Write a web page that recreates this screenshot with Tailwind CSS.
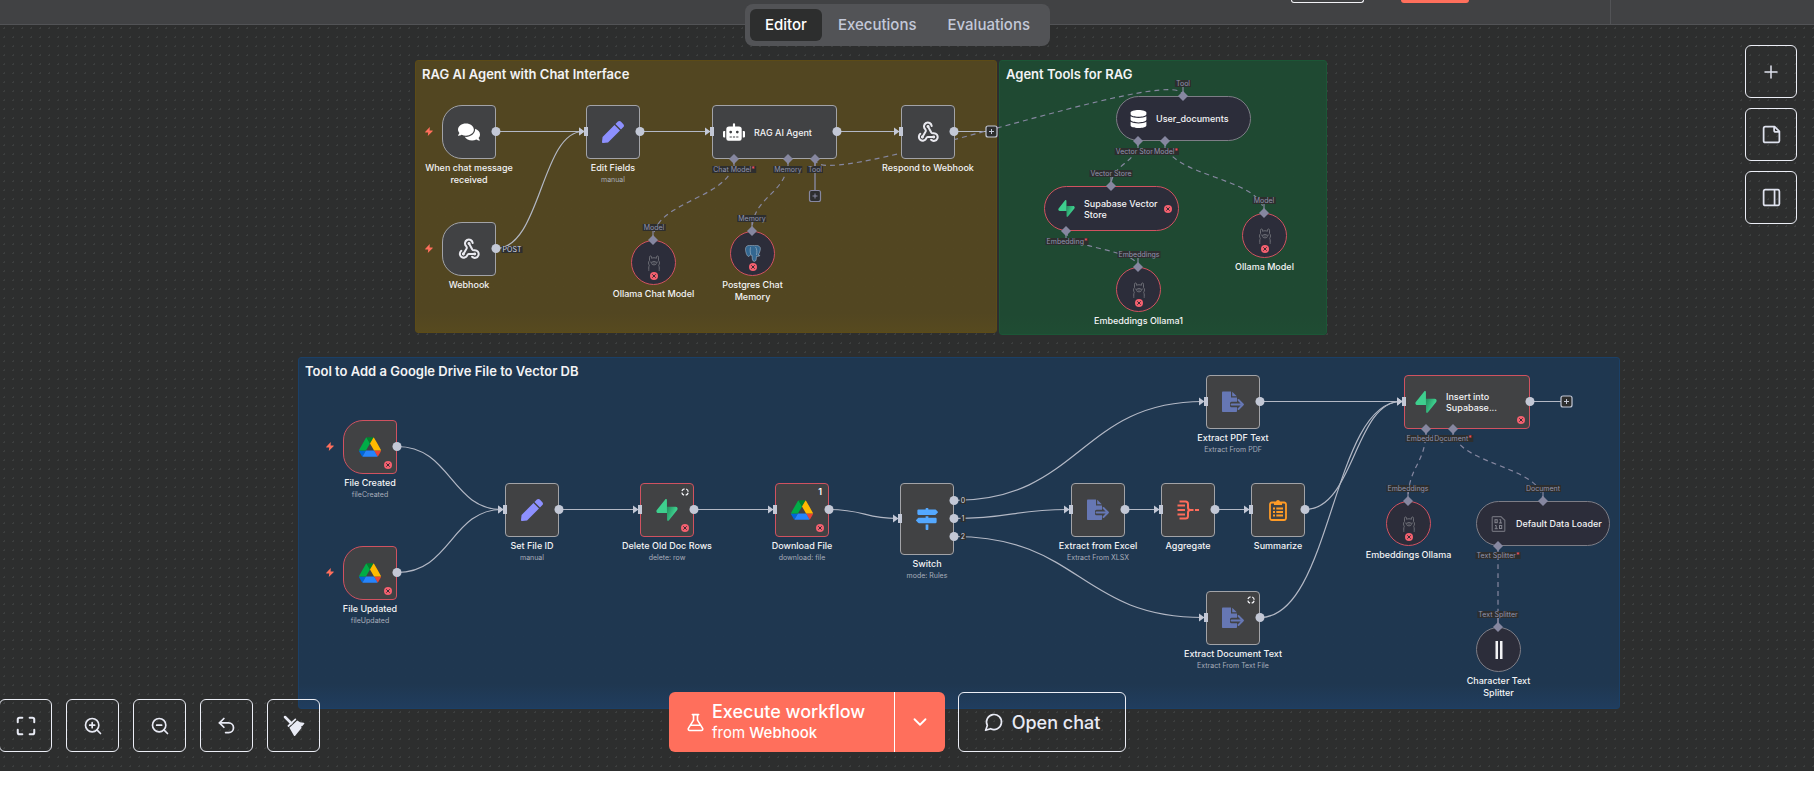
<!DOCTYPE html>
<html lang="en">
<head>
<meta charset="utf-8">
<title>Workflow editor</title>
<script src="https://cdn.jsdelivr.net/npm/@tailwindcss/browser@4"></script>
</head>
<body class="bg-white font-['Inter','Liberation_Sans',sans-serif]">

<svg class="absolute size-0" aria-hidden="true">
  <defs>
    <linearGradient id="supaShade" x1="53.9" y1="54.9" x2="94.1" y2="71.8" gradientUnits="userSpaceOnUse"><stop stop-color="#249361"/><stop offset="1" stop-color="#3ecf8e"/></linearGradient>
  </defs>
  <symbol id="chat" viewBox="0 0 576 512"><path fill="#fff" d="M416 192c0-88.4-93.1-160-208-160S0 103.6 0 192c0 34.3 14.1 65.9 38 92-13.4 30.2-35.5 54.2-35.8 54.5-2.2 2.3-2.8 5.7-1.5 8.7S4.8 352 8 352c36.6 0 66.9-12.3 88.7-25 32.2 15.7 70.3 25 111.3 25 114.9 0 208-71.6 208-160zm122 220c23.9-26 38-57.7 38-92 0-66.9-53.5-124.2-129.3-148.1.9 6.6 1.3 13.3 1.3 20.1 0 105.9-107.7 192-240 192-10.8 0-21.3-.8-31.7-1.9C207.8 439.6 281.8 480 368 480c41 0 79.1-9.2 111.3-25 21.8 12.7 52.1 25 88.7 25 3.2 0 6.1-1.9 7.3-4.8 1.3-2.9.7-6.3-1.5-8.7-.3-.3-22.4-24.2-35.8-54.5z"/></symbol>
  <symbol id="pen" viewBox="0 0 512 512"><path fill="#8d90ff" d="M290.74 93.24l128.02 128.02-277.99 277.99-114.14 12.6C11.35 513.54-1.56 500.62.14 485.34l12.7-114.22 277.9-277.88zm207.2-19.06l-60.11-60.11c-18.75-18.75-49.16-18.75-67.91 0l-56.55 56.55 128.02 128.02 56.55-56.55c18.75-18.76 18.75-49.16 0-67.91z"/></symbol>
  <symbol id="robot" viewBox="0 0 640 512"><path fill="#fff" d="M32,224H64V416H32A31.96,31.96,0,0,1,0,384V256A31.96,31.96,0,0,1,32,224Zm512-48V448a64.06,64.06,0,0,1-64,64H160a64.06,64.06,0,0,1-64-64V176a79.97,79.97,0,0,1,80-80H288V32a32,32,0,0,1,64,0V96H464A79.97,79.97,0,0,1,544,176ZM264,256a40,40,0,1,0-40,40A40,40,0,0,0,264,256Zm-8,128H192v32h64Zm96,0H288v32h64ZM456,256a40,40,0,1,0-40,40A40,40,0,0,0,456,256Zm-8,128H384v32h64ZM640,256V384a31.96,31.96,0,0,1-32,32H576V224h32A31.96,31.96,0,0,1,640,256Z"/></symbol>
  <symbol id="database" viewBox="0 0 448 512"><path fill="#fff" d="M448 73.143v45.714C448 159.143 347.667 192 224 192S0 159.143 0 118.857V73.143C0 32.857 100.333 0 224 0s224 32.857 224 73.143zM448 176v102.857C448 319.143 347.667 352 224 352S0 319.143 0 278.857V176c48.125 33.143 136.208 48.572 224 48.572S399.874 209.143 448 176zm0 160v102.857C448 479.143 347.667 512 224 512S0 479.143 0 438.857V336c48.125 33.143 136.208 48.572 224 48.572S399.874 369.143 448 336z"/></symbol>
  <symbol id="signs" viewBox="0 0 512 512"><path fill="#54a8ff" d="M507.31 84.69L464 41.37c-6-6-14.14-9.37-22.63-9.37H288V16c0-8.84-7.16-16-16-16h-32c-8.84 0-16 7.16-16 16v16H56c-13.25 0-24 10.75-24 24v80c0 13.25 10.75 24 24 24h385.37c8.49 0 16.62-3.37 22.63-9.37l43.31-43.31c6.25-6.26 6.25-16.38 0-22.63zM224 496c0 8.84 7.16 16 16 16h32c8.84 0 16-7.16 16-16V384h-64v112zm232-272H288v-32h-64v32H70.63c-8.49 0-16.62 3.37-22.63 9.37L4.69 276.69c-6.25 6.25-6.25 16.38 0 22.63L48 342.63c6 6 14.14 9.37 22.63 9.37H456c13.25 0 24-10.75 24-24v-80c0-13.25-10.75-24-24-24z"/></symbol>
  <symbol id="drive" viewBox="0 0 87.3 78"><path fill="#0066da" d="m6.6 66.85 3.85 6.65c.8 1.4 1.95 2.5 3.3 3.3l13.75-23.8h-27.5c0 1.55.4 3.1 1.2 4.5z"/><path fill="#00ac47" d="m43.65 25-13.75-23.8c-1.35.8-2.5 1.9-3.3 3.3l-25.4 44a9.06 9.06 0 0 0 -1.2 4.5h27.5z"/><path fill="#ea4335" d="m73.55 76.8c1.35-.8 2.5-1.9 3.3-3.3l1.6-2.75 7.65-13.25c.8-1.4 1.2-2.95 1.2-4.5h-27.502l5.852 11.5z"/><path fill="#00832d" d="m43.65 25 13.75-23.8c-1.35-.8-2.9-1.2-4.5-1.2h-18.5c-1.6 0-3.15.45-4.5 1.2z"/><path fill="#2684fc" d="m59.8 53h-32.3l-13.75 23.8c1.35.8 2.9 1.2 4.5 1.2h50.8c1.6 0 3.15-.45 4.5-1.2z"/><path fill="#ffba00" d="m73.4 26.5-12.7-22c-.8-1.4-1.95-2.5-3.3-3.3l-13.75 23.8 16.15 28h27.45c0-1.55-.4-3.1-1.2-4.5z"/></symbol>
  <symbol id="supabase" viewBox="0 0 109 113"><path fill="url(#supaShade)" d="M63.7 110.284C60.85 113.885 55.05 111.912 54.98 107.314L53.97 40.06L99.19 40.06C107.38 40.06 111.95 49.52 106.86 55.94L63.7 110.284Z"/><path fill="#3ecf8e" d="M45.3 2.07C48.18 -1.53 53.97 .44 54.04 5.04L54.48 72.29H9.83C1.64 72.29 -2.93 62.83 2.17 56.42L45.3 2.07Z"/></symbol>
  <symbol id="webhook" viewBox="0 0 24 24"><g fill="none" stroke="#e9e9ef" stroke-width="2.2" stroke-linecap="round" stroke-linejoin="round"><path d="M18.5 17.5h-7c-.4 0-.9.5-1.4 1.4A4.2 4.2 0 1 1 3.6 14"/><path d="m5.8 17.6 3.6-6.2c.3-.6.2-1.6-.4-2.4a4.2 4.2 0 1 1 7-3.6"/><path d="m12 6.1 3.6 6.4c.3.5 1.3.8 2.4.8a4.2 4.2 0 1 1-2.6 7.2"/></g><g fill="#e9e9ef"><circle cx="12" cy="6" r="1.6"/><circle cx="5.8" cy="17.5" r="1.6"/><circle cx="18.2" cy="17.5" r="1.6"/></g></symbol>
  <symbol id="extract" viewBox="0 0 22 22"><path fill="#6677b4" d="M0 1.5C0 1 .4.5 1 .5h8v6h6v4.2H9.5A1.5 1.5 0 0 0 8 12.2v2.6a1.5 1.5 0 0 0 1.5 1.5H15V20c0 .6-.4 1-1 1H1c-.6 0-1-.4-1-1zM10.2.7 14.8 5.3h-4.6z"/><path fill="none" stroke="#6677b4" stroke-width="1.8" stroke-linecap="round" stroke-linejoin="round" d="M9.5 13.5H21M16.5 9l4.5 4.5-4.5 4.5"/></symbol>
  <symbol id="aggregate" viewBox="0 0 22 22"><g fill="none" stroke="#ff6c5b" stroke-width="2"><path d="M2.5 2.5h6a2.500 2.500 0 0 1 2.500 2.500v3.500A2.500 2.500 0 0 0 13.500 11 2.500 2.500 0 0 0 11 13.500V17a2.500 2.500 0 0 1-2.500 2.500h-6"/><path d="M.5 6.500h7.500M.5 11h7.500M.5 15.500h7.500" stroke-width="1.8"/><path d="M13 11h3.500M18 11h4"/></g></symbol>
  <symbol id="clipboard" viewBox="0 0 18 22"><path fill="none" stroke="#ff9b26" stroke-width="1.8" d="M3 3.500h12A1.900 1.900 0 0 1 17 5.400v13.700A1.900 1.900 0 0 1 15 21H3a1.900 1.900 0 0 1-2-1.900V5.400A1.900 1.900 0 0 1 3 3.500z"/><path fill="#ff9b26" d="M5 3h2a2 2 0 0 1 4 0h2v3H5z"/><path stroke="#ff9b26" stroke-width="1.8" d="M4 9.500h2M7.300 9.500H14M4 13h2M7.300 13H14M4 16.500h2M7.300 16.500H14"/></symbol>
  <symbol id="llama" viewBox="0 0 12 16"><g fill="none" stroke="#6c6d75" stroke-width="1"><path d="M1.500 5.500V2.200C1.500.7 3.200.4 3.600 2v1.300c1.400-.7 3.400-.7 4.800 0V2C8.800.4 10.500.7 10.500 2.200v3.300M1.500 5.500C0 7 .4 9 1.300 10.300.5 12 .8 14 .8 15.800M10.500 5.500c1.500 1.500 1.100 3.500.2 4.800.8 1.700.5 3.700.5 5.500"/><ellipse cx="6" cy="8.200" rx="2.400" ry="1.700"/></g><g fill="#8b8c94"><circle cx="2.900" cy="7" r=".6"/><circle cx="9.100" cy="7" r=".6"/><circle cx="6" cy="8" r=".6"/></g></symbol>
  <symbol id="postgres" viewBox="0 0 16 17"><path fill="#336791" stroke="#b8c8d6" stroke-width=".5" d="M4.600.5C2.200.2.500 1.600.5 4.200c0 2.800 1.400 7 2.900 7.200.9.100 1.500-.8 2.200-1.600.3.500.8.700 1.500.6.100 2.200-.2 6 2.200 6 2 0 2-2.300 2.200-5.100.9.300 2.700 0 3.600-.9-.5-.2-1.300-.1-1.900-.3 1.600-2.600 2.700-6.200 1.900-7.800C13.900.4 11.600.1 9.900.7 8.200.3 6.500.400 4.600.5z"/><path fill="none" stroke="#a9bccb" stroke-width=".6" d="M5.800 9.600C5 7.500 5 4 5.600 2.200M10.600 2c1.300 2 1.600 5 .9 8"/></symbol>
  <symbol id="loader" viewBox="0 0 14 16"><path fill="none" stroke="#6d6e78" stroke-width="1.2" d="M1.500.7h8l3.800 3.500v10.200c0 .5-.4.900-.9.900H1.500a.8.8 0 0 1-.8-.9V1.500c0-.5.300-.8.800-.8z"/><g fill="none" stroke="#85868f" stroke-width="1"><rect x="3.500" y="3.700" width="2.200" height="3"/><path d="M8 3.700h1.200V7M7.500 7h3M3.500 9.500h1.200v3M3.200 12.700h3"/><rect x="8" y="9.500" width="2.200" height="3"/></g></symbol>
  <symbol id="splitter" viewBox="0 0 18 18"><path fill="#f2f2f4" d="M5.500 0h2.500v18H5.500zM10 0h2.500v18H10z"/></symbol>
  <symbol id="bolt" viewBox="0 0 8 9"><path fill="#ff6f5c" d="M4.800 0 .3 4.800c-.3.400-.1.700.3.700h2.600L2.800 9l4.800-4.700c.3-.4.100-.8-.3-.8H4.600z"/></symbol>
  <symbol id="error" viewBox="0 0 8 8"><circle cx="4" cy="4" r="4" fill="#f4606f"/><path stroke="#3b2b33" stroke-width="1" stroke-linecap="round" d="m2.600 2.600 2.800 2.800M5.400 2.600 2.600 5.400"/></symbol>
  <symbol id="runonce" viewBox="0 0 8 8"><circle cx="4" cy="4" r="3.200" fill="none" stroke="#f0f0f4" stroke-width="1.300" stroke-dasharray="3.400 1.627" stroke-dashoffset="-.8"/></symbol>
</svg>

<div class="flex h-screen flex-col overflow-hidden pb-[33px]">
  <div class="relative flex min-h-0 flex-1 flex-col overflow-hidden bg-[#2d2e2e]">

    <header class="flex h-[25px] shrink-0 items-start justify-end border-b border-[#525356] bg-[#414244]">
      <button type="button" aria-label="Share" class="h-[3px] w-[73px] rounded-b-md border border-t-0 border-[#f2f2f6]"></button>
      <button type="button" aria-label="Save" class="mr-[141px] ml-[37px] h-[3px] w-[68px] rounded-b-md bg-[#ff6f5c]"></button>
      <div class="h-6 w-[204px] border-l border-[#525356]"></div>
    </header>

    <main class="relative flex-1 bg-[radial-gradient(circle,#3c3e3e_1px,transparent_1px)] bg-[size:9px_9px] bg-[position:0_-1px]">
      <!-- Workflow canvas: sticky notes, edges, nodes, handles and handle labels -->
      <div id="canvas" class="absolute inset-x-0 -top-[25px]"></div>
    </main>

    <!-- View switch and floating controls, laid over the canvas -->
    <nav class="absolute top-1 right-0 -left-[19px] flex justify-center">
      <div class="flex gap-px rounded-lg bg-[#525356] p-[5px]" role="tablist">
        <button type="button" role="tab" aria-selected="true" class="h-8 rounded-md bg-[#2d2e2e] px-[15px] text-[15px] font-medium text-white">Editor</button>
        <button type="button" role="tab" class="h-8 px-[15px] text-[15px] font-medium text-[#c3c8d8]">Executions</button>
        <button type="button" role="tab" class="h-8 px-[15px] text-[15px] font-medium text-[#c3c8d8]">Evaluations</button>
      </div>
    </nav>

    <div class="absolute top-[45px] right-[17px] flex flex-col gap-2.5">
      <button type="button" aria-label="Add node" class="flex h-[53px] w-[52px] items-center justify-center rounded-md border border-[#eceef6] text-[#dfe2ee]"><svg class="size-[18px]" viewBox="0 0 24 24" fill="none" stroke="currentColor" stroke-width="2" stroke-linecap="round"><path d="M4 12h16M12 4v16"/></svg></button>
      <button type="button" aria-label="Add sticky note" class="flex h-[53px] w-[52px] items-center justify-center rounded-md border border-[#eceef6] text-[#dfe2ee]"><svg class="size-[21px]" viewBox="0 0 24 24" fill="none" stroke="currentColor" stroke-width="2" stroke-linejoin="round"><path d="M15.500 3H5a2 2 0 0 0-2 2v14a2 2 0 0 0 2 2h14a2 2 0 0 0 2-2V8.500z"/><path d="M15 3v4a2 2 0 0 0 2 2h4"/></svg></button>
      <button type="button" aria-label="Toggle panel" class="flex h-[53px] w-[52px] items-center justify-center rounded-md border border-[#eceef6] text-[#dfe2ee]"><svg class="size-[21px]" viewBox="0 0 24 24" fill="none" stroke="currentColor" stroke-width="2"><rect x="3" y="3" width="18" height="18" rx="2"/><path d="M15.500 3v18"/></svg></button>
    </div>

    <div class="absolute bottom-[19px] -left-px flex gap-3.5">
      <button type="button" aria-label="Fit view" class="flex size-[53px] items-center justify-center rounded-md border border-[#eceef6] text-[#e8eaf4]"><svg class="size-[22px]" viewBox="0 0 24 24" fill="none" stroke="currentColor" stroke-width="2.200" stroke-linecap="round" stroke-linejoin="round"><path d="M8 3H5a2 2 0 0 0-2 2v3M21 8V5a2 2 0 0 0-2-2h-3M3 16v3a2 2 0 0 0 2 2h3M16 21h3a2 2 0 0 0 2-2v-3"/></svg></button>
      <button type="button" aria-label="Zoom in" class="flex size-[53px] items-center justify-center rounded-md border border-[#eceef6] text-[#e8eaf4]"><svg class="size-5" viewBox="0 0 24 24" fill="none" stroke="currentColor" stroke-width="2" stroke-linecap="round"><circle cx="11" cy="11" r="8"/><path d="m21 21-4.300-4.300M11 8v6M8 11h6"/></svg></button>
      <button type="button" aria-label="Zoom out" class="flex size-[53px] items-center justify-center rounded-md border border-[#eceef6] text-[#e8eaf4]"><svg class="size-5" viewBox="0 0 24 24" fill="none" stroke="currentColor" stroke-width="2" stroke-linecap="round"><circle cx="11" cy="11" r="8"/><path d="m21 21-4.300-4.300M8 11h6"/></svg></button>
      <button type="button" aria-label="Undo" class="flex size-[53px] items-center justify-center rounded-md border border-[#eceef6] text-[#e8eaf4]"><svg class="size-[21px]" viewBox="0 0 24 24" fill="none" stroke="currentColor" stroke-width="2" stroke-linecap="round" stroke-linejoin="round"><path d="M9 14 4 9l5-5"/><path d="M4 9h10.500a5.500 5.500 0 0 1 0 11H11"/></svg></button>
      <button type="button" aria-label="Tidy up" class="flex size-[53px] items-center justify-center rounded-md border border-[#eceef6] text-[#e8eaf4]"><svg class="size-[22px]" viewBox="0 0 24 24" fill="currentColor"><path d="m2.200 2.200 6.800 6.800" stroke="currentColor" stroke-width="2.800" stroke-linecap="round"/><path d="M5.900 12 13.500 4.800" stroke="currentColor" stroke-width="1.900" stroke-linecap="round"/><path d="M7 13.800 15.500 6l3.200 2 3.900.4c.7.100.9.900.4 1.400l-2.200 2.400-.9-.300.3 2.200-6.900 8.500c-.5.500-1 .4-1.300-.1z"/></svg></button>
    </div>

    <div class="pointer-events-none absolute right-0 bottom-[19px] -left-[19px] flex justify-center gap-[13px]">
      <div class="pointer-events-auto flex h-[60px] overflow-hidden rounded-md bg-[#ff6f5c] text-white">
        <button type="button" class="flex w-[226px] items-center gap-[7px] border-r border-white pl-[17px] text-left">
          <svg class="size-[19px]" viewBox="0 0 24 24" fill="none" stroke="currentColor" stroke-width="2" stroke-linecap="round" stroke-linejoin="round"><path d="M8 2h8M9.500 2v7L3 19.500A1.700 1.700 0 0 0 4.500 22h15a1.700 1.700 0 0 0 1.500-2.500L14.500 9V2M6.500 15.500h11"/></svg>
          <span class="flex flex-col"><span class="text-[18px] leading-[22px] font-medium">Execute workflow</span><span class="text-[15px] leading-5">from <span class="font-medium">Webhook</span></span></span>
        </button>
        <button type="button" aria-label="Choose trigger" class="flex w-[50px] items-center justify-center"><svg class="size-[22px]" viewBox="0 0 24 24" fill="none" stroke="currentColor" stroke-width="2" stroke-linecap="round" stroke-linejoin="round"><path d="m6 9 6 6 6-6"/></svg></button>
      </div>
      <button type="button" class="pointer-events-auto flex h-[60px] w-[168px] items-center justify-center gap-2 rounded-md border border-[#eceef6] text-[18px] font-medium text-[#e8eaf4]">
        <svg class="size-5" viewBox="0 0 24 24" fill="none" stroke="currentColor" stroke-width="2" stroke-linejoin="round"><path d="M7.900 20A9 9 0 1 0 4 16.100L2 22z"/></svg>
        Open chat
      </button>
    </div>
  </div>
</div>

<script>
const notes = [
  { x: 415, y: 60, w: 582, h: 273, t: 'RAG AI Agent with Chat Interface', c: 'border-[#5c4b17] from-[#524621] to-[#574a1f]' },
  { x: 999, y: 60, w: 328, h: 275, t: 'Agent Tools for RAG', c: 'border-[#1c5636] from-[#1f4932] to-[#1f4c33]' },
  { x: 298, y: 357, w: 1322, h: 352, t: 'Tool to Add a Google Drive File to Vector DB', c: 'border-[#1b4067] from-[#1f3750] to-[#203d5e]' },
];
// k: trigger | box | wide | pill | round
const nodes = [
  { k: 'trigger', x: 442, y: 105, w: 54, h: 54, i: 'chat', n: 'When chat message<br>received' },
  { k: 'trigger', x: 442, y: 222, w: 54, h: 54, i: 'webhook', n: 'Webhook' },
  { k: 'box', x: 586, y: 105, w: 54, h: 54, i: 'pen', n: 'Edit Fields', s: 'manual' },
  { k: 'wide', x: 712, y: 105, w: 125, h: 54, i: 'robot', n: 'RAG AI Agent' },
  { k: 'box', x: 901, y: 105, w: 54, h: 54, i: 'webhook', n: 'Respond to Webhook' },
  { k: 'round', x: 631, y: 240, w: 45, h: 45, i: 'llama', n: 'Ollama Chat Model', e: 1 },
  { k: 'round', x: 730, y: 231, w: 45, h: 45, i: 'postgres', n: 'Postgres Chat<br>Memory', e: 1 },
  { k: 'pill', x: 1116, y: 96, w: 135, h: 45, i: 'database', n: 'User_documents' },
  { k: 'pill', x: 1044, y: 186, w: 135, h: 45, i: 'supabase', n: 'Supabase Vector<br>Store', e: 1 },
  { k: 'round', x: 1116, y: 267, w: 45, h: 45, i: 'llama', n: 'Embeddings Ollama1', e: 1 },
  { k: 'round', x: 1242, y: 213, w: 45, h: 45, i: 'llama', n: 'Ollama Model', e: 1 },
  { k: 'trigger', x: 343, y: 420, w: 54, h: 54, i: 'drive', n: 'File Created', s: 'fileCreated', e: 1 },
  { k: 'trigger', x: 343, y: 546, w: 54, h: 54, i: 'drive', n: 'File Updated', s: 'fileUpdated', e: 1 },
  { k: 'box', x: 505, y: 483, w: 54, h: 54, i: 'pen', n: 'Set File ID', s: 'manual' },
  { k: 'box', x: 640, y: 483, w: 54, h: 54, i: 'supabase', n: 'Delete Old Doc Rows', s: 'delete: row', e: 1, o: 1 },
  { k: 'box', x: 775, y: 483, w: 54, h: 54, i: 'drive', n: 'Download File', s: 'download: file', e: 1, b: '1' },
  { k: 'box', x: 900, y: 483, w: 54, h: 72, i: 'signs', n: 'Switch', s: 'mode: Rules' },
  { k: 'box', x: 1071, y: 483, w: 54, h: 54, i: 'extract', n: 'Extract from Excel', s: 'Extract From XLSX' },
  { k: 'box', x: 1161, y: 483, w: 54, h: 54, i: 'aggregate', n: 'Aggregate' },
  { k: 'box', x: 1251, y: 483, w: 54, h: 54, i: 'clipboard', n: 'Summarize' },
  { k: 'box', x: 1206, y: 375, w: 54, h: 54, i: 'extract', n: 'Extract PDF Text', s: 'Extract From PDF' },
  { k: 'box', x: 1206, y: 591, w: 54, h: 54, i: 'extract', n: 'Extract Document Text', s: 'Extract From Text File', o: 1 },
  { k: 'wide', x: 1404, y: 375, w: 126, h: 54, i: 'supabase', n: 'Insert into<br>Supabase...', e: 1 },
  { k: 'round', x: 1386, y: 501, w: 45, h: 45, i: 'llama', n: 'Embeddings Ollama', e: 1 },
  { k: 'pill', x: 1476, y: 501, w: 134, h: 45, i: 'loader', n: 'Default Data Loader' },
  { k: 'round', x: 1476, y: 627, w: 45, h: 45, i: 'splitter', n: 'Character Text<br>Splitter' },
];
// main edges: x1, y1, x2, y2
const edges = [
  [496,132,586,132],[496,249,586,132],[640,132,712,132],[837,132,901,132],
  [397,447,505,510],[397,573,505,510],[559,510,640,510],[694,510,775,510],[829,510,900,519],
  [954,501,1206,402],[954,519,1071,510],[954,537,1206,618],[1125,510,1161,510],[1215,510,1251,510],
  [1260,402,1404,402],[1305,510,1404,402],[1260,618,1404,402],
];
const loose = [[954,132,991,132],[1530,402,1566,402]];
// sub-node edges, bottom handle to top handle
const subs = [
  [734,159,653,240],[788,159,752,231],[815,159,1183,96],[1138,141,1111,186],[1165,141,1264,213],
  [1066,231,1138,267],[1426,429,1408,501],[1453,429,1543,501],[1498,546,1498,627],
];
const labels = [
  [734,169,'Chat Model',1],[788,169,'Memory'],[815,169,'Tool'],[654,227,'Model'],[752,218,'Memory'],
  [1183,83,'Tool'],[1138,151,'Vector Store',1],[1166,151,'Model',1],[1111,173,'Vector Store'],[1264,200,'Model'],
  [1067,241,'Embedding',1],[1139,254,'Embeddings'],[1427,438,'Embedding',1],[1453,438,'Document',1],
  [1408,488,'Embeddings'],[1543,488,'Document'],[1498,555,'Text Splitter',1],[1498,614,'Text Splitter'],
];
const outs = [[512,249,'POST'],[963,500,'0'],[963,518,'1'],[963,536,'2']];

const shape = {
  trigger: 'rounded-l-[20px] rounded-r-[4px] bg-[#414244]',
  box: 'rounded-[4px] bg-[#414244]',
  wide: 'rounded-[4px] bg-[#414244]',
  pill: 'rounded-full bg-[#2c2d3a]',
  round: 'rounded-full bg-[#2c2d3a]',
};
const use = (id, cls) => `<svg class="${cls}"><use href="#${id}"/></svg>`;
const at = (x, y, w, h) => `left:${x}px;top:${y}px;width:${w}px;height:${h}px`;
// centre of the pixel row just above y, so that 1px horizontals stay crisp
const row = v => v - 0.5;

let html = '';
for (const n of notes)
  html += `<section class="absolute rounded-[3px] border bg-linear-to-b from-93% ${n.c}" style="${at(n.x, n.y, n.w, n.h)}"><h2 class="pt-[5px] pl-1.5 text-[13px] leading-4 font-semibold text-[#f3f3f5]">${n.t}</h2></section>`;

const plus = (x, y, c) => `<rect x="${x - 5.5}" y="${y - 5.5}" width="11" height="11" rx="2" fill="#2d2e2e" stroke="${c}" stroke-width="1.2"/><path d="M${x - 2.5} ${y}h5M${x} ${y - 2.5}v5" stroke="${c}"/>`;

html += '<svg class="absolute top-0 left-0 h-[804px] w-[1814px]" fill="none" aria-hidden="true">';
for (const [a, b, c, d] of edges) {
  const m = (a + c) / 2;
  html += `<path stroke="#b3b8c5" stroke-width="1.2" d="M${a} ${row(b)}C${m} ${row(b)} ${m} ${row(d)} ${c - 3} ${row(d)}"/>`;
}
for (const [a, b, c, d] of loose) html += `<path stroke="#b3b8c5" stroke-width="1.2" d="M${a} ${row(b)}H${c}"/>`;
html += '<path stroke="#8687a0" stroke-width="1.4" d="M815 159V191"/>';
for (const [a, b, c, d] of subs) {
  const up = d < b, y1 = up ? b + 37 : (b + d) / 2, y2 = up ? d - 37 : (b + d) / 2;
  html += `<path stroke="#8687a0" stroke-width="1.2" stroke-dasharray="5 4" d="M${a} ${b}C${a} ${y1} ${c} ${y2} ${c} ${d}"/>`;
  html += `<path stroke="#8687a0" stroke-width="1.2" d="M${a} ${b}v8M${c} ${d}v-10"/>`;
}
html += '</svg>';

for (const n of nodes) {
  const inline = n.k === 'wide' || n.k === 'pill';
  const line = n.e ? 'border-[#d05260]' : n.k === 'pill' || n.k === 'round' ? 'border-[#7d7d86]' : 'border-[#a2a3a7]';
  const isize = { llama: 'h-4 w-3', postgres: 'h-[17px] w-4', database: 'h-[18px] w-[17px]', loader: 'h-4 w-[17px]', splitter: 'size-[18px]' }[n.i]
    || (n.k === 'pill' ? 'size-[17px]' : 'size-[22px]');
  html += `<div class="absolute" style="${at(n.x, n.y, n.w, n.h)}">`;
  html += `<div class="relative flex size-full items-center border ${line} ${shape[n.k]} ${n.k === 'wide' ? 'gap-[9px] pl-2.5' : n.k === 'pill' ? 'gap-[9px] pl-[13px]' : 'justify-center'}">`;
  html += use(n.i, isize + ' shrink-0');
  if (inline) html += `<span class="text-[9px] leading-[11px] font-medium whitespace-nowrap text-[#f3f3f5]">${n.n}</span>`;
  if (n.e) html += use('error', 'absolute size-2 ' + { pill: 'right-1.5', round: 'bottom-1', box: 'right-1 bottom-1', wide: 'right-1 bottom-1', trigger: 'right-1 bottom-1' }[n.k]);
  if (n.o) html += use('runonce', 'absolute top-1 right-1 size-2');
  if (n.b) html += `<span class="absolute top-0.5 right-1.5 text-[9px] leading-[11px] font-semibold text-white">${n.b}</span>`;
  html += '</div>';
  if (n.k === 'trigger') html += use('bolt', 'absolute top-[22px] -left-[17px] h-[9px] w-2');
  if (!inline) html += `<div class="absolute top-full left-1/2 flex -translate-x-1/2 flex-col items-center pt-[3px] text-center whitespace-nowrap"><span class="text-[9px] leading-3 font-medium text-[#f3f3f5]">${n.n}</span>${n.s ? `<span class="text-[7px] leading-3 text-[#a9aebb]">${n.s}</span>` : ''}</div>`;
  html += '</div>';
}

html += '<svg class="absolute top-0 left-0 h-[804px] w-[1814px]" fill="none" aria-hidden="true">';
for (const [a, b] of [...edges, ...loose]) html += `<circle cx="${a}" cy="${row(b)}" r="4.5" fill="#c3c8d6"/>`;
for (const [a, b, c, d] of edges) html += `<path fill="#c3c8d6" d="M${c - 2} ${d - 5}h4v9h-4zM${c - 7} ${d - 4.5}l5.5 4-5.5 4z"/>`;
for (const [a, b, c, d] of subs)
  for (const [x, y] of [[a, b], [c, d]]) html += `<path fill="#8687a0" d="M${x} ${y - 5}l5 5-5 5-5-5z"/>`;
html += plus(991.5, 131.5, '#c3c8d6') + plus(1566.5, 401.5, '#c3c8d6') + plus(815, 196, '#8687a0');
html += '</svg>';

for (const [x, y, t, r] of labels)
  html += `<span class="absolute -translate-x-1/2 bg-[#2d2e2e] px-px text-[7px] leading-[7px] whitespace-nowrap text-[#9294ad]" style="left:${x}px;top:${y - 3}px">${t}${r ? '<span class="text-[#ff5465]">*</span>' : ''}</span>`;
for (const [x, y, t] of outs)
  html += `<span class="absolute -translate-x-1/2 bg-[#2d2e2e] px-px text-[7px] leading-[7px] text-[#d2d6e2]" style="left:${x}px;top:${y - 3}px">${t}</span>`;

document.getElementById('canvas').innerHTML = html;
</script>
</body>
</html>
